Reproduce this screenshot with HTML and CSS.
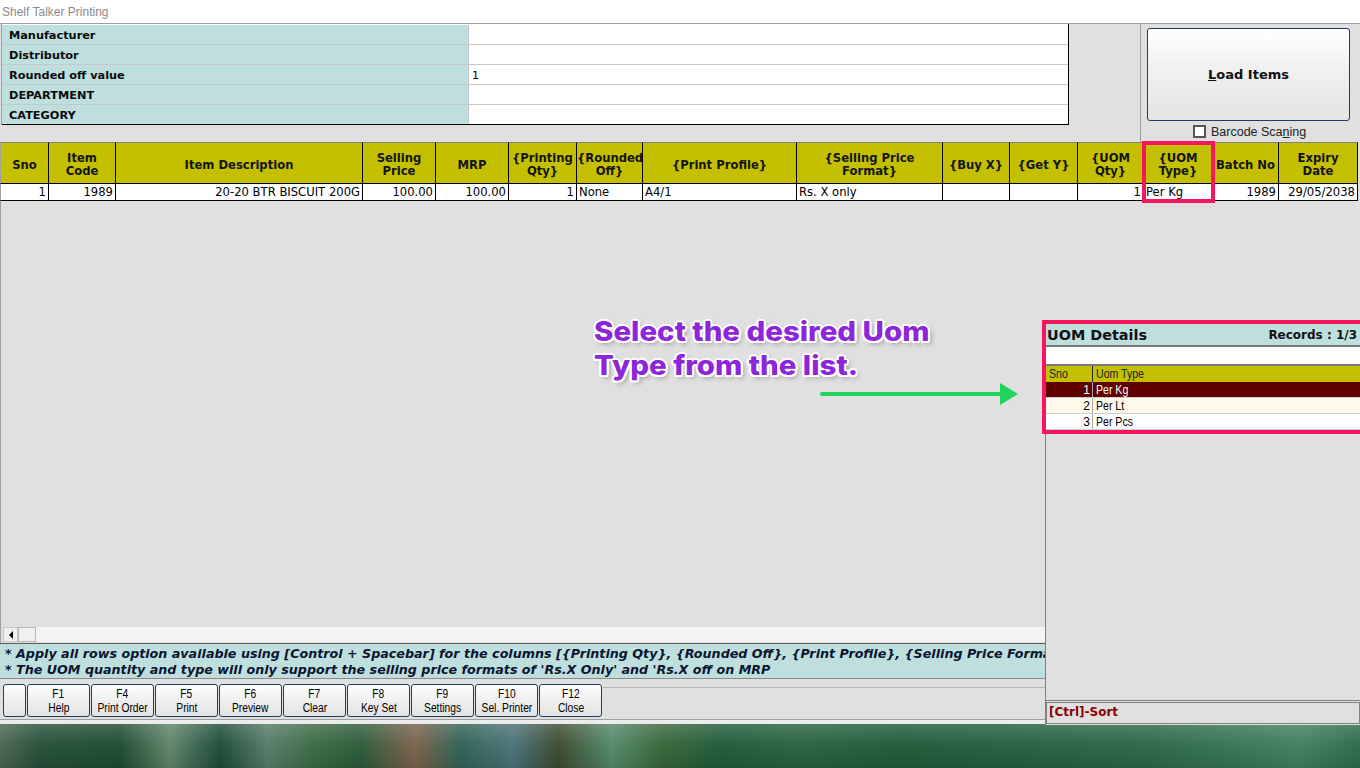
FILE: index.html
```html
<!DOCTYPE html>
<html>
<head>
<meta charset="utf-8">
<title>Shelf Talker Printing</title>
<link rel="stylesheet" href="styles.css">
</head>
<body>
<div class="app">
  <div class="titlebar">Shelf Talker Printing</div>

  <div class="top">
    <div class="filters">
      <div class="frow"><div class="flabel">Manufacturer</div><div class="fvalue"></div></div>
      <div class="frow"><div class="flabel">Distributor</div><div class="fvalue"></div></div>
      <div class="frow"><div class="flabel">Rounded off value</div><div class="fvalue">1</div></div>
      <div class="frow"><div class="flabel">DEPARTMENT</div><div class="fvalue"></div></div>
      <div class="frow last"><div class="flabel">CATEGORY</div><div class="fvalue"></div></div>
    </div>
    <div class="topgap"></div>
    <div class="loadpane">
      <button class="loadbtn"><u>L</u>oad Items</button>
      <div class="chk"><span class="box"></span><span>Barcode Sca<u>n</u>ing</span></div>
    </div>
  </div>

  <table class="items">
    <thead>
      <tr>
        <th class="c1">Sno</th>
        <th class="c2">Item<br>Code</th>
        <th class="c3">Item Description</th>
        <th class="c4">Selling<br>Price</th>
        <th class="c5">MRP</th>
        <th class="c6">{Printing<br>Qty}</th>
        <th class="c7">{Rounded<br>Off}</th>
        <th class="c8">{Print Profile}</th>
        <th class="c9">{Selling Price<br>Format}</th>
        <th class="c10">{Buy X}</th>
        <th class="c11">{Get Y}</th>
        <th class="c12">{UOM<br>Qty}</th>
        <th class="c13">{UOM<br>Type}</th>
        <th class="c14">Batch No</th>
        <th class="c15">Expiry<br>Date</th>
      </tr>
    </thead>
    <tbody>
      <tr>
        <td class="r">1</td>
        <td class="r">1989</td>
        <td class="r">20-20 BTR BISCUIT 200G</td>
        <td class="r">100.00</td>
        <td class="r">100.00</td>
        <td class="r">1</td>
        <td>None</td>
        <td>A4/1</td>
        <td>Rs. X only</td>
        <td></td>
        <td></td>
        <td class="r">1</td>
        <td>Per Kg</td>
        <td class="r">1989</td>
        <td class="r">29/05/2038</td>
      </tr>
    </tbody>
  </table>

  <div class="gridbody"></div>

  <div class="hscroll">
    <span class="sbtn"><svg width="6" height="8" viewBox="0 0 6 8"><polygon points="5,0 1,4 5,8" fill="#000"/></svg></span>
    <span class="thumb"></span>
    <span class="track"></span>
  </div>

  <div class="notes">
    <div class="note">* Apply all rows option available using [Control + Spacebar] for the columns [{Printing Qty}, {Rounded Off}, {Print Profile}, {Selling Price Format}, {Buy X}, {Get Y}]</div>
    <div class="note">* The UOM quantity and type will only support the selling price formats of 'Rs.X Only' and 'Rs.X off on MRP</div>
  </div>

  <div class="fbar">
    <button class="fkey blank"></button>
    <button class="fkey"><span class="fk">F1</span><span class="fk">Help</span></button>
    <button class="fkey"><span class="fk">F4</span><span class="fk">Print Order</span></button>
    <button class="fkey"><span class="fk">F5</span><span class="fk">Print</span></button>
    <button class="fkey"><span class="fk">F6</span><span class="fk">Preview</span></button>
    <button class="fkey"><span class="fk">F7</span><span class="fk">Clear</span></button>
    <button class="fkey"><span class="fk">F8</span><span class="fk">Key Set</span></button>
    <button class="fkey"><span class="fk">F9</span><span class="fk">Settings</span></button>
    <button class="fkey"><span class="fk">F10</span><span class="fk">Sel. Printer</span></button>
    <button class="fkey"><span class="fk">F12</span><span class="fk">Close</span></button>
    <div class="ffill"></div>
  </div>

  <div class="status"></div>
  <div class="desktop"></div>

  <!-- overlays -->
  <div class="uom">
    <div class="uhead"><span class="utitle">UOM Details</span><span class="urec">Records : 1/3</span></div>
    <div class="usearch"></div>
    <div class="urow uth"><span class="usno"><span class="nt">Sno</span></span><span class="utype"><span class="nt">Uom Type</span></span></div>
    <div class="urow sel"><span class="usno">1</span><span class="utype"><span class="nt">Per Kg</span></span></div>
    <div class="urow alt"><span class="usno">2</span><span class="utype"><span class="nt">Per Lt</span></span></div>
    <div class="urow"><span class="usno">3</span><span class="utype"><span class="nt">Per Pcs</span></span></div>
    <div class="uempty"></div>
    <div class="usort">[Ctrl]-Sort</div>
  </div>

  <div class="hl hl-col"></div>
  <div class="hl hl-uom"></div>

  <div class="callout">Select the desired Uom<br>Type from the list.</div>
  <svg class="arrow" width="200" height="24" viewBox="0 0 200 24">
    <line x1="2" y1="12" x2="184" y2="12" stroke="#1fd35c" stroke-width="4" stroke-linecap="round"/>
    <polygon points="180,1 198,12 180,23" fill="#1fd35c"/>
  </svg>
</div>
</body>
</html>
```

FILE: styles.css
```css
* { box-sizing: border-box; }
html, body { margin: 0; padding: 0; }
body {
  width: 1360px;
  height: 768px;
  overflow: hidden;
  background: #e0e0e0;
  font-family: "DejaVu Sans", Verdana, sans-serif;
  font-size: 11px;
  color: #000;
}
.app {
  position: relative;
  width: 1360px;
  height: 768px;
  display: flex;
  flex-direction: column;
  overflow: hidden;
}

/* title */
.titlebar {
  height: 23px;
  flex: 0 0 23px;
  background: #fff;
  color: #8a8a8a;
  font-family: "Liberation Sans", Arial, sans-serif;
  font-size: 12px;
  line-height: 24px;
  padding-left: 2px;
}

/* top section */
.top {
  flex: 0 0 119px;
  display: flex;
  border-top: 1px solid #a0a0a0;
}
.filters {
  width: 1068px;
  margin-left: 1px;
  height: 101px;
  padding-top: 1px;
  background: #fff;
  border-left: 1px solid #a0a0a0;
  border-right: 1px solid #000;
}
.frow {
  display: flex;
  height: 20px;
  border-bottom: 1px solid #c8c8c8;
}
.frow.last { border-bottom: 1px solid #000; }
.flabel {
  width: 467px;
  background: #bfdfdf;
  border-right: 1px solid #c8c8c8;
  font-weight: bold;
  font-size: 11.3px;
  padding: 2px 0 0 7px;
  line-height: 17px;
  color: #0a0a0a;
}
.fvalue {
  flex: 1;
  padding: 2px 0 0 3px;
  line-height: 17px;
}
.topgap {
  flex: 0 0 72px;
  border-right: 1px solid #a0a0a0;
}
.loadpane {
  flex: 1;
  padding: 4px 0 0 6px;
  display: flex;
  flex-direction: column;
}
.loadbtn {
  width: 203px;
  height: 93px;
  border: 1px solid #1e3d66;
  border-radius: 3px;
  background: linear-gradient(to bottom, #ffffff 0%, #f0f0f0 45%, #e4e4e4 100%);
  font-family: "DejaVu Sans", Verdana, sans-serif;
  font-weight: bold;
  font-size: 13px;
  color: #111;
  padding: 0;
}
.chk {
  display: flex;
  align-items: center;
  margin-top: 4px;
  padding-left: 46px;
  font-family: "Liberation Sans", Arial, sans-serif;
  font-size: 12.5px;
  color: #222;
  height: 13px;
}
.chk .box {
  width: 13px;
  height: 13px;
  border: 2px solid #555;
  background: #fff;
  margin-right: 5px;
}

/* grid */
.items {
  flex: 0 0 59px;
  border-collapse: separate;
  border-spacing: 0;
  table-layout: fixed;
  width: 1358px;
}
.items th, .items td {
  box-sizing: border-box;
  border-right: 1px solid #000;
  border-bottom: 1px solid #000;
  padding: 0 2px;
  white-space: nowrap;
  overflow: hidden;
}
.items th {
  height: 42px;
  border-top: 1px solid #808080;
  background: #c4c000;
  font-weight: bold;
  font-size: 11.6px;
  line-height: 13px;
  color: #141414;
  text-align: center;
  padding: 4px 0 0 0;
}
.items td {
  height: 17px;
  background: #fff;
  font-size: 11.6px;
  line-height: 15px;
  padding-top: 1px;
  color: #000;
}
.items th.c1, .items td:first-child { border-left: 1px solid #a0a0a0; }
.items td.r { text-align: right; }
.c1 { width: 49px; }
.c2 { width: 67px; }
.c3 { width: 247px; }
.c4 { width: 73px; }
.c5 { width: 73px; }
.c6 { width: 68px; }
.c7 { width: 66px; }
.c8 { width: 154px; }
.c9 { width: 146px; }
.c10 { width: 67px; }
.c11 { width: 68px; }
.c12 { width: 66px; }
.c13 { width: 69px; }
.c14 { width: 66px; }
.c15 { width: 79px; }

.gridbody {
  flex: 0 0 425px;
  border-left: 1px solid #a0a0a0;
}

.hscroll {
  flex: 0 0 17px;
  display: flex;
  padding: 1px 0 0 2px;
  border-left: 1px solid #a0a0a0;
}
.sbtn {
  width: 15px;
  height: 15px;
  background: #f0f0f0;
  border: 1px solid #c8c8c8;
  display: flex;
  align-items: center;
  justify-content: center;
}
.thumb {
  width: 18px;
  height: 15px;
  background: #f0f0f0;
  border: 1px solid #b8b8b8;
}
.track {
  flex: 1;
  height: 15px;
  background: #f4f4f4;
}

/* notes */
.notes {
  flex: 0 0 36px;
  background: #bfdfdf;
  border-top: 1px solid #5a5a5a;
  border-bottom: 1px solid #8a8a8a;
  padding: 2px 0 0 5px;
  overflow: hidden;
}
.note {
  font-weight: bold;
  font-style: italic;
  font-size: 12.7px;
  line-height: 16px;
  color: #0c1430;
  white-space: nowrap;
}

/* function keys */
.fbar {
  flex: 0 0 41px;
  display: flex;
  align-items: flex-start;
  gap: 1px;
  padding: 5px 0 0 3px;
  border-bottom: 1px solid #a0a0a0;
}
.fkey {
  width: 63px;
  height: 33px;
  border: 1px solid #1e3d66;
  border-radius: 3px;
  background: linear-gradient(to bottom, #fdfdfd 0%, #efefef 50%, #e4e4e4 100%);
  padding: 2px 0 0 0;
  display: flex;
  flex-direction: column;
  align-items: center;
  font-family: "Liberation Sans", Arial, sans-serif;
  font-size: 12.5px;
  line-height: 14px;
  color: #000;
}
.fkey.blank { width: 23px; }
.fk {
  display: block;
  white-space: nowrap;
  transform: scaleX(0.82);
}
.ffill {
  flex: 1;
  margin-top: 3px;
  height: 30px;
  border-top: 1px solid #b4b4b4;
}

.status {
  flex: 0 0 4px;
  background: #ececec;
}
.desktop {
  flex: 0 0 44px;
  background:
    linear-gradient(to bottom, rgba(255,255,255,0.18) 0%, rgba(255,255,255,0.04) 45%, rgba(0,0,0,0.08) 100%),
    linear-gradient(to right,
      #4a6652 0px, #244e38 40px, #1c4a30 120px, #5e8468 170px, #1b4a38 220px,
      #557a66 268px, #3a6a44 312px, #2a5a38 360px, #7a604a 415px, #2f6252 460px,
      #4a7078 513px, #3a4a2c 558px, #52886a 612px, #386638 660px, #1e5a38 720px,
      #26623f 800px, #1e5a38 900px, #225e3e 1000px, #2a6646 1150px, #3f7e5e 1300px, #2a6a48 1360px);
}

/* UOM panel overlay */
.uom {
  position: absolute;
  left: 1045px;
  top: 322px;
  width: 315px;
  height: 403px;
  background: #e0e0e0;
  border-left: 1px solid #808080;
  display: flex;
  flex-direction: column;
}
.uhead {
  height: 23px;
  flex: 0 0 23px;
  background: #bfdfdf;
  display: flex;
  align-items: center;
  justify-content: space-between;
  padding: 2px 3px 0 1px;
  font-weight: bold;
  color: #111;
}
.utitle { font-size: 14.4px; }
.urec { font-size: 12px; }
.usearch {
  flex: 0 0 21px;
  background: #fff;
  border-top: 2px solid #7a7a7a;
  border-bottom: 2px solid #7a7a7a;
}
.urow {
  flex: 0 0 16px;
  display: flex;
  background: #fff;
  border-bottom: 1px solid #cfcfcf;
  font-family: "Liberation Sans", Arial, sans-serif;
  font-size: 12px;
  line-height: 17px;
  color: #000;
  overflow: hidden;
}
.urow .usno {
  width: 47px;
  text-align: right;
  padding-right: 2px;
  border-right: 1px solid #a8a8a8;
}
.urow .utype { padding-left: 3px; }
.nt {
  display: inline-block;
  transform: scaleX(0.88);
  transform-origin: left center;
  white-space: nowrap;
}
.urow.uth { background: #c4c000; border-bottom: 0; color: #222; }
.urow.uth .usno { text-align: left; padding-left: 3px; border-right: 1px solid #222; }
.urow.sel { background: #600000; color: #fff; }
.urow.alt { background: #fdf8ea; }
.uempty { flex: 1; border-bottom: 1px solid #808080; }
.usort {
  flex: 0 0 22px;
  margin: 1px 0 1px 0;
  border: 1px solid #808080;
  color: #8b0000;
  font-weight: bold;
  font-size: 12px;
  line-height: 19px;
  padding-left: 2px;
}

/* highlights */
.hl {
  position: absolute;
  border: 4px solid #f5175c;
}
.hl-col { left: 1142px; top: 141px; width: 73px; height: 62px; }
.hl-uom { left: 1042px; top: 320px; width: 324px; height: 114px; }

.callout {
  position: absolute;
  left: 594px;
  top: 315px;
  font-family: Inter, "Open Sans", sans-serif;
  font-weight: 800;
  font-size: 27px;
  line-height: 34px;
  color: #8c26d8;
  white-space: nowrap;
  transform: scaleX(1.09);
  transform-origin: left top;
  text-shadow:
    2px 0 0 #fff, -2px 0 0 #fff, 0 2px 0 #fff, 0 -2px 0 #fff,
    1.5px 1.5px 0 #fff, -1.5px 1.5px 0 #fff, 1.5px -1.5px 0 #fff, -1.5px -1.5px 0 #fff,
    2.5px 3px 5px rgba(0,0,0,0.35);
}
.arrow {
  position: absolute;
  left: 820px;
  top: 382px;
}
```
